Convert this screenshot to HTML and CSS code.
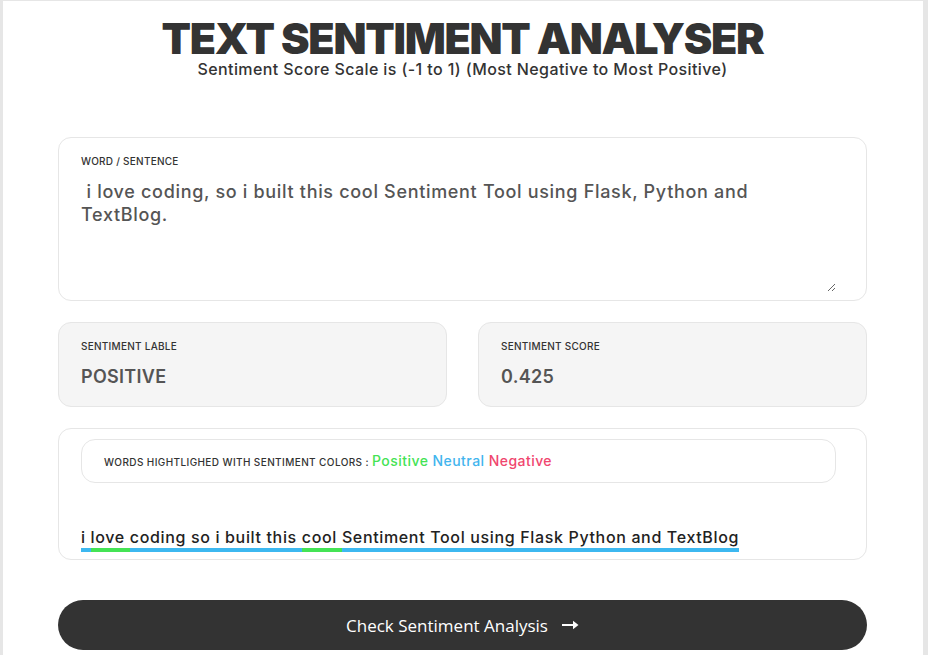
FILE: index.html
```html
<!DOCTYPE html>
<html lang="en">
<head>
<meta charset="utf-8">
<title>Text Sentiment Analyser</title>
<link rel="stylesheet" href="styles.css">
</head>
<body>
<div class="page">
  <header class="head">
    <h1 class="title">TEXT SENTIMENT ANALYSER</h1>
    <p class="subtitle">Sentiment Score Scale is (-1 to 1) (Most Negative to Most Positive)</p>
  </header>

  <div class="card input-card">
    <label class="label" for="txt">WORD / SENTENCE</label>
    <textarea id="txt" class="text-input"> i love coding, so i built this cool Sentiment Tool using Flask, Python and TextBlog.</textarea>
  </div>

  <div class="results">
    <div class="card result">
      <div class="label">SENTIMENT LABLE</div>
      <div class="value">POSITIVE</div>
    </div>
    <div class="card result">
      <div class="label">SENTIMENT SCORE</div>
      <div class="value">0.425</div>
    </div>
  </div>

  <div class="card highlight-card">
    <div class="legend"><span class="label legend-label">WORDS HIGHTLIGHED WITH SENTIMENT COLORS : </span><span class="pos">Positive</span> <span class="neu">Neutral</span> <span class="neg">Negative</span></div>
    <p class="sentence"><span class="w neu-u">i </span><span class="w pos-u">love </span><span class="w neu-u">coding so i built this </span><span class="w pos-u">cool </span><span class="w neu-u">Sentiment Tool using Flask Python and TextBlog</span></p>
  </div>

  <button class="btn" type="button">Check Sentiment Analysis
    <svg class="arrow" width="17" height="10" viewBox="0 0 17 10" aria-hidden="true"><path d="M0 5H12" stroke="#fff" stroke-width="2"/><path d="M11 0.8L16.5 5L11 9.2Z" fill="#fff"/></svg>
  </button>
</div>
</body>
</html>
```
FILE: styles.css
```css
html, body {
  margin: 0;
  padding: 0;
}
body {
  background: #e6e6e6;
  font-family: Inter, "Open Sans", sans-serif;
  color: #333;
}
.page {
  margin: 1px 5px 0 3px;
  background: #fff;
  padding: 0 56px 30px 55px;
  min-height: 700px;
  box-sizing: border-box;
}
.head {
  text-align: center;
  padding-top: 14px;
}
.title {
  margin: 0;
  font-size: 43px;
  line-height: 46px;
  font-weight: 900;
  color: #333;
  letter-spacing: -1.3px;
}
.subtitle {
  margin: 0;
  font-size: 16px;
  line-height: 16px;
  padding-bottom: 2px;
  font-weight: 500;
  color: #333;
  letter-spacing: 0.4px;
}
.card {
  border: 1px solid #e6e6e6;
  border-radius: 13px;
  box-sizing: border-box;
}
.input-card {
  margin-top: 58px;
  height: 164px;
  padding: 16px 30px 8px 22px;
  display: flex;
  flex-direction: column;
}
.label {
  font-size: 10px;
  font-weight: 500;
  color: #333;
  line-height: 14px;
  letter-spacing: 0.25px;
}
.text-input {
  flex: 1;
  margin-top: 12px;
  border: none;
  outline: none;
  padding: 0 14px 0 0;
  font-family: inherit;
  font-size: 18px;
  font-weight: 500;
  line-height: 23px;
  letter-spacing: 0.68px;
  color: #555;
  resize: vertical;
  background: transparent;
}
.results {
  display: grid;
  grid-template-columns: 1fr 1fr;
  gap: 31px;
  margin-top: 21px;
}
.result {
  background: #f5f5f5;
  height: 85px;
  padding: 16px 22px 0;
}
.value {
  margin-top: 13px;
  font-size: 18px;
  font-weight: 600;
  color: #555;
  line-height: 22px;
  letter-spacing: 0.3px;
}
.highlight-card {
  margin-top: 21px;
  height: 132px;
  padding: 10px 30px 0 22px;
}
.legend {
  border: 1px solid #e6e6e6;
  border-radius: 14px;
  height: 44px;
  box-sizing: border-box;
  padding: 0 22px;
  line-height: 42px;
  white-space: pre;
  font-size: 14px;
  font-weight: 500;
  letter-spacing: 0.45px;
}
.legend-label {
  letter-spacing: 0.4px;
}
.pos { color: #44e355; }
.neu { color: #42b5ee; }
.neg { color: #f0466e; }
.sentence {
  margin: 43px 0 0;
  font-size: 16px;
  font-weight: 500;
  color: #222;
  line-height: 22px;
  letter-spacing: 0.65px;
}
.w {
  white-space: pre;
  border-bottom: 4px solid;
  padding-bottom: 1px;
}
.neu-u { border-color: #3db8f0; }
.pos-u { border-color: #44e355; }
.btn {
  display: flex;
  align-items: center;
  justify-content: center;
  gap: 14px;
  width: 100%;
  height: 50px;
  margin-top: 40px;
  border: none;
  border-radius: 25px;
  background: #333;
  color: #fff;
  font-family: "Open Sans", sans-serif;
  font-size: 17px;
  font-weight: 500;
}
.arrow {
  display: block;
}
```
